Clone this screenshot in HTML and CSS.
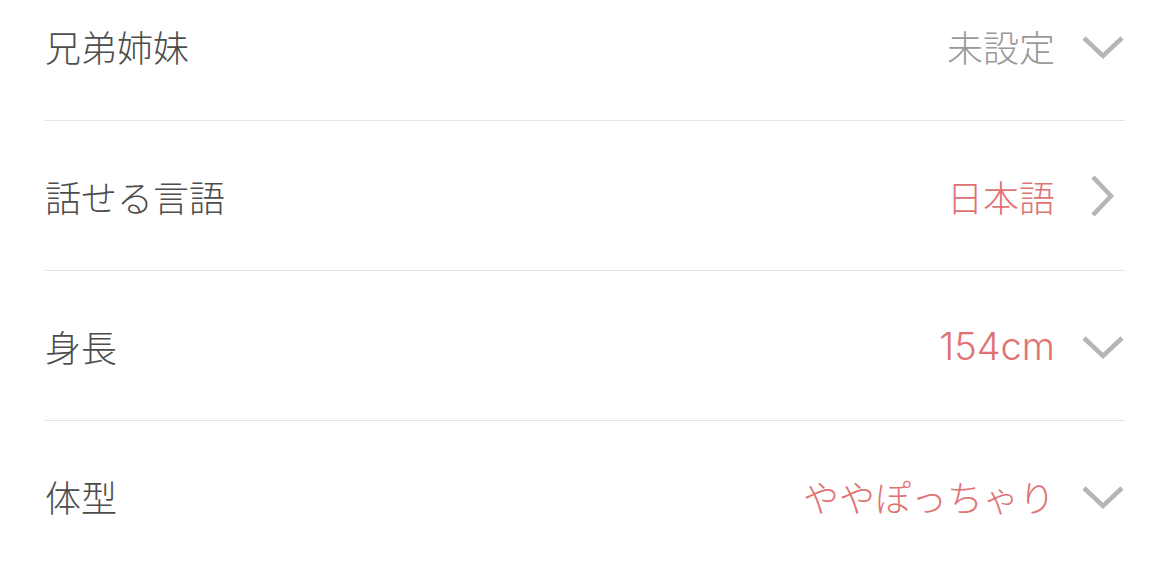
FILE: index.html
```html
<!DOCTYPE html>
<html lang="ja">
<head>
  <meta charset="UTF-8" />
  <meta name="viewport" content="width=device-width, initial-scale=1.0" />
  <title>プロフィール</title>
  <link rel="stylesheet" href="styles.css">
</head>
<body>
  <ul class="profile-list">
    <li class="row">
      <span class="label">兄弟姉妹</span>
      <span class="value unset">未設定</span>
      <svg class="chev" viewBox="0 0 44 44"><polyline points="3,14 22,32 41,14" /></svg>
    </li>
    <li class="row">
      <span class="label">話せる言語</span>
      <span class="value">日本語</span>
      <svg class="chev" viewBox="0 0 44 44"><polyline points="12,3 30,22 12,41" /></svg>
    </li>
    <li class="row">
      <span class="label">身長</span>
      <span class="value num">154cm</span>
      <svg class="chev" viewBox="0 0 44 44"><polyline points="3,14 22,32 41,14" /></svg>
    </li>
    <li class="row">
      <span class="label">体型</span>
      <span class="value">ややぽっちゃり</span>
      <svg class="chev" viewBox="0 0 44 44"><polyline points="3,14 22,32 41,14" /></svg>
    </li>
  </ul>
</body>
</html>
```

FILE: styles.css
```css
body {
  margin: 0;
  background: #fff;
  font-family: "Liberation Sans", "Noto Sans CJK JP", sans-serif;
  overflow: hidden;
}
.profile-list {
  list-style: none;
  margin: -29px 45px 0 45px;
  padding: 0;
}
.row {
  display: flex;
  align-items: center;
  height: 149px;
  border-bottom: 1px solid #e3e3e3;
}
.row:last-child {
  border-bottom: none;
}
.label {
  flex: 1;
  font-size: 36px;
  font-weight: 300;
  color: #4d4d4d;
}
.value {
  font-size: 36px;
  font-weight: 300;
  color: #e07272;
}
.value.unset {
  color: #999;
}
.value.num {
  font-family: Inter, "Liberation Sans", sans-serif;
  font-size: 38px;
}
.chev {
  width: 44px;
  height: 44px;
  margin-left: 26px;
  fill: none;
  stroke: #b5b5b5;
  stroke-width: 4.5;
}
```
